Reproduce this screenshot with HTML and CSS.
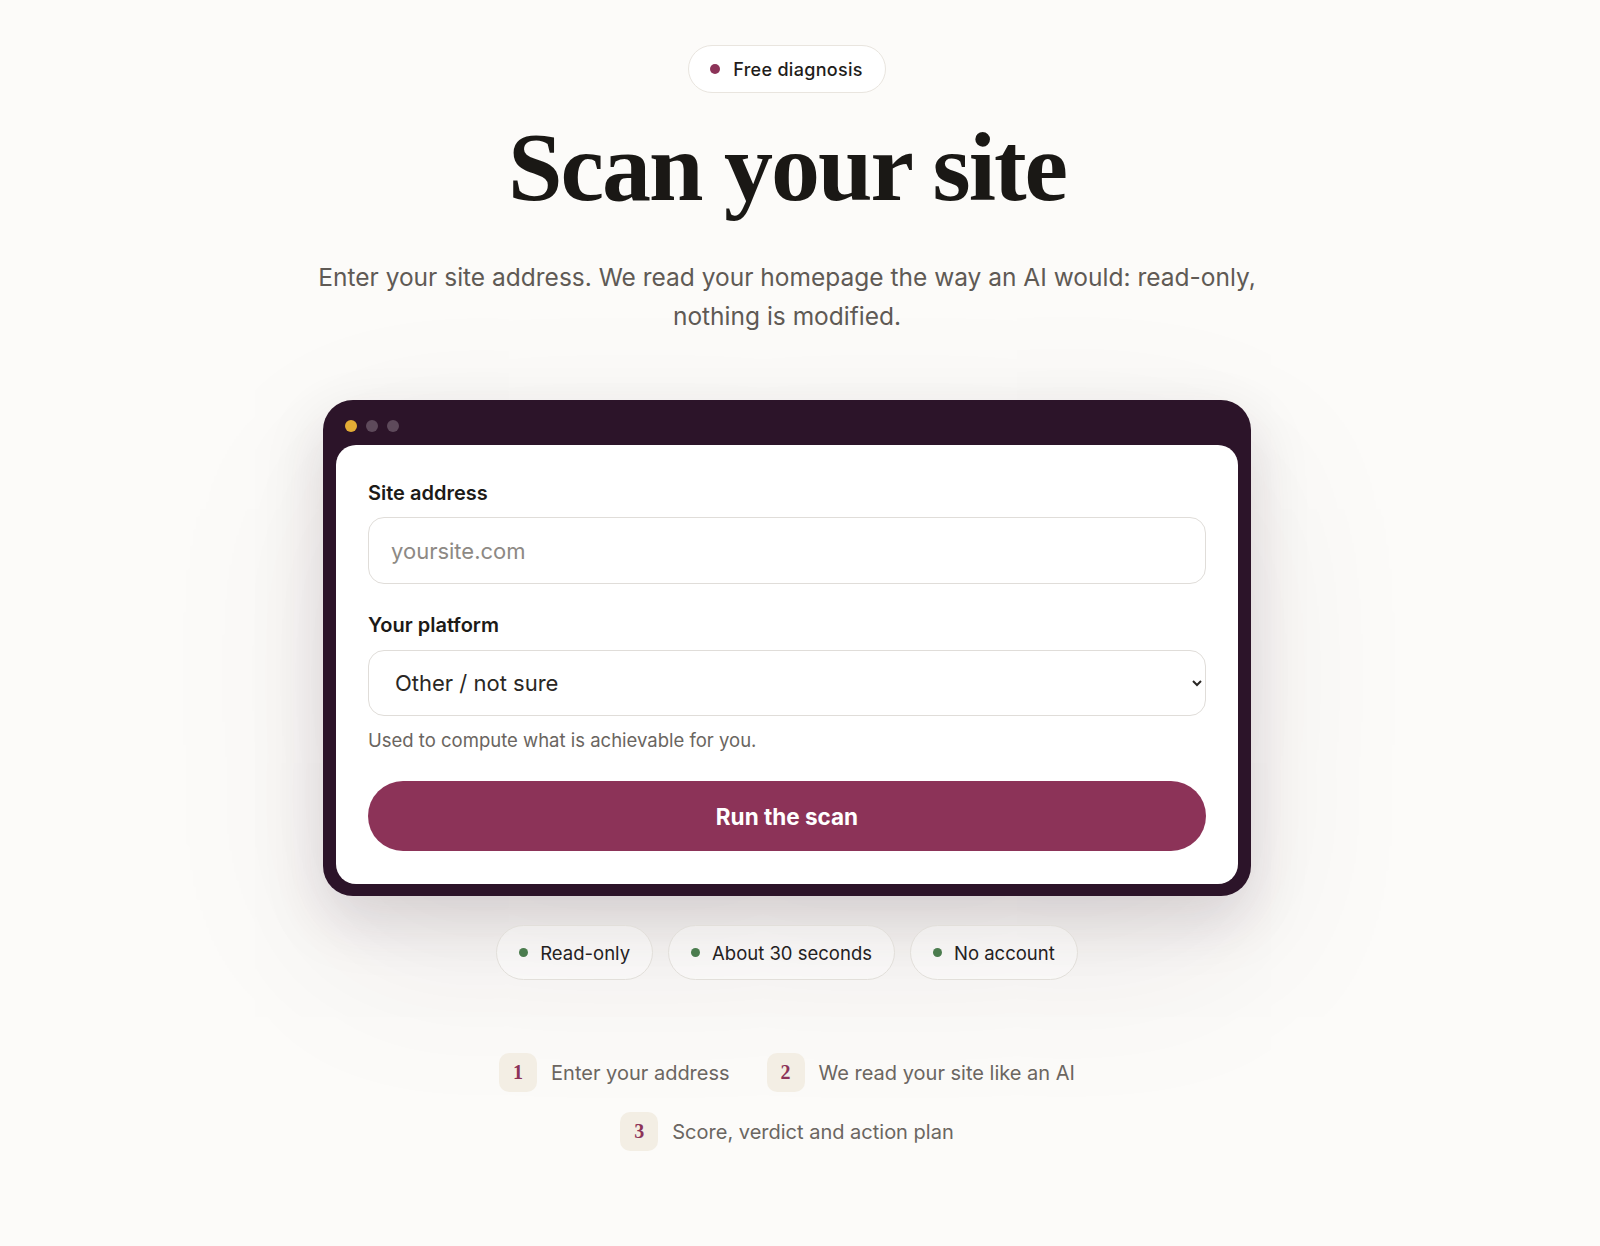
FILE: index.html
```html
<!DOCTYPE html>
<html lang="en">

<head>
    <meta charset="UTF-8" />
    <meta name="viewport" content="width=device-width, initial-scale=1.0" />
    <title>Scan your site</title>
    <link rel="stylesheet" href="styles.css">
</head>

<body>
    <main class="page">
        <div class="badge"><span class="dot"></span>Free diagnosis</div>
        <h1 class="title">Scan your site</h1>
        <p class="lead">Enter your site address. We read your homepage the way an AI would: read-only, nothing is modified.</p>

        <div class="window">
            <div class="window-bar">
                <span class="light yellow"></span>
                <span class="light"></span>
                <span class="light"></span>
            </div>
            <form class="scan-form">
                <label class="field-label" for="site">Site address</label>
                <input class="field" id="site" type="text" placeholder="yoursite.com">

                <label class="field-label second" for="platform">Your platform</label>
                <select class="field select" id="platform">
                    <option>WordPress</option>
                    <option>Shopify</option>
                    <option>Wix</option>
                    <option selected>Other / not sure</option>
                </select>
                <p class="hint">Used to compute what is achievable for you.</p>

                <button class="run" type="button">Run the scan</button>
            </form>
        </div>

        <div class="facts">
            <span class="fact"><span class="dot green"></span>Read-only</span>
            <span class="fact"><span class="dot green"></span>About 30 seconds</span>
            <span class="fact"><span class="dot green"></span>No account</span>
        </div>

        <ol class="steps">
            <li class="step"><span class="num">1</span>Enter your address</li>
            <li class="step"><span class="num">2</span>We read your site like an AI</li>
            <li class="step"><span class="num">3</span>Score, verdict and action plan</li>
        </ol>
    </main>
</body>

</html>
```

FILE: styles.css
```css
body {
    margin: 0;
    background-color: #fcfbf9;
    color: #1c1a17;
    font-family: Inter, "Noto Sans", sans-serif;
}

.page {
    display: flex;
    flex-direction: column;
    align-items: center;
    padding: 45px 26px 80px 0;
}

.badge {
    display: flex;
    align-items: center;
    gap: 13px;
    height: 46px;
    padding: 0 22px 0 21px;
    border: 1.5px solid #e9e5df;
    border-radius: 999px;
    background-color: #fff;
    font-size: 18px;
    font-weight: 500;
    letter-spacing: 0.3px;
    color: #1f1d1a;
}

.dot {
    width: 10px;
    height: 10px;
    border-radius: 50%;
    background-color: #8c3358;
}

.dot.green {
    width: 9px;
    height: 9px;
    background-color: #4b7c4e;
}

.title {
    margin: 25px 0 0;
    font-family: "Liberation Serif", serif;
    font-size: 98px;
    font-weight: 700;
    line-height: 1;
    letter-spacing: -2px;
    color: #1a1815;
}

.lead {
    max-width: 960px;
    margin: 42px 0 0;
    text-align: center;
    font-size: 24.5px;
    line-height: 39px;
    color: #5f5a55;
}

.window {
    width: 928px;
    margin-top: 64px;
    background-color: #2c1429;
    border-radius: 30px;
    box-shadow: 0 24px 60px rgba(46, 20, 40, 0.15), 0 60px 180px rgba(46, 20, 40, 0.08);
}

.window-bar {
    display: flex;
    gap: 9px;
    padding: 20px 22px 13px;
}

.light {
    width: 12px;
    height: 12px;
    border-radius: 50%;
    background-color: #5e4a5b;
}

.light.yellow {
    background-color: #e3ac35;
}

.scan-form {
    display: flex;
    flex-direction: column;
    margin: 0 13px 12px;
    padding: 35px 32px 33px;
    background-color: #fff;
    border-radius: 20px;
}

.field-label {
    font-size: 20px;
    font-weight: 600;
    line-height: 26px;
    margin-bottom: 11px;
}

.field-label.second {
    margin-top: 28px;
    margin-bottom: 12px;
}

.field {
    box-sizing: border-box;
    height: 67px;
    padding: 0 22px;
    border: 1.5px solid #e0ddd9;
    border-radius: 16px;
    background-color: #fff;
    font-family: inherit;
    font-size: 22px;
    color: #2a2724;
    outline: none;
}

.field::placeholder {
    color: #8d8984;
}

.select {
    height: 66px;
    padding-left: 22px;
}

.hint {
    margin: 12px 0 0;
    font-size: 18.5px;
    line-height: 24px;
    color: #6a6560;
}

.run {
    height: 70px;
    margin-top: 29px;
    border: none;
    border-radius: 999px;
    background-color: #8c3358;
    color: #fff;
    font-family: inherit;
    font-size: 22.5px;
    font-weight: 700;
    cursor: pointer;
}

.run:hover {
    background-color: #7a2a4c;
}

.facts {
    display: flex;
    gap: 15px;
    margin-top: 29px;
}

.fact {
    display: flex;
    align-items: center;
    gap: 12px;
    height: 53px;
    padding: 0 22px;
    border: 1.5px solid #e2dfda;
    border-radius: 999px;
    background-color: rgba(255, 255, 255, 0.35);
    font-size: 18.5px;
    color: #24211e;
}

.steps {
    display: flex;
    flex-wrap: wrap;
    justify-content: center;
    gap: 20px 37px;
    max-width: 620px;
    margin: 73px 0 0;
    padding: 0;
    list-style: none;
}

.step {
    display: flex;
    align-items: center;
    gap: 14px;
    font-size: 20px;
    color: #6b6661;
}

.num {
    display: flex;
    align-items: center;
    justify-content: center;
    width: 38px;
    height: 39px;
    border-radius: 10px;
    background-color: #f3eee4;
    font-family: "Liberation Serif", serif;
    font-size: 20px;
    font-weight: 700;
    color: #8c3358;
}
```
